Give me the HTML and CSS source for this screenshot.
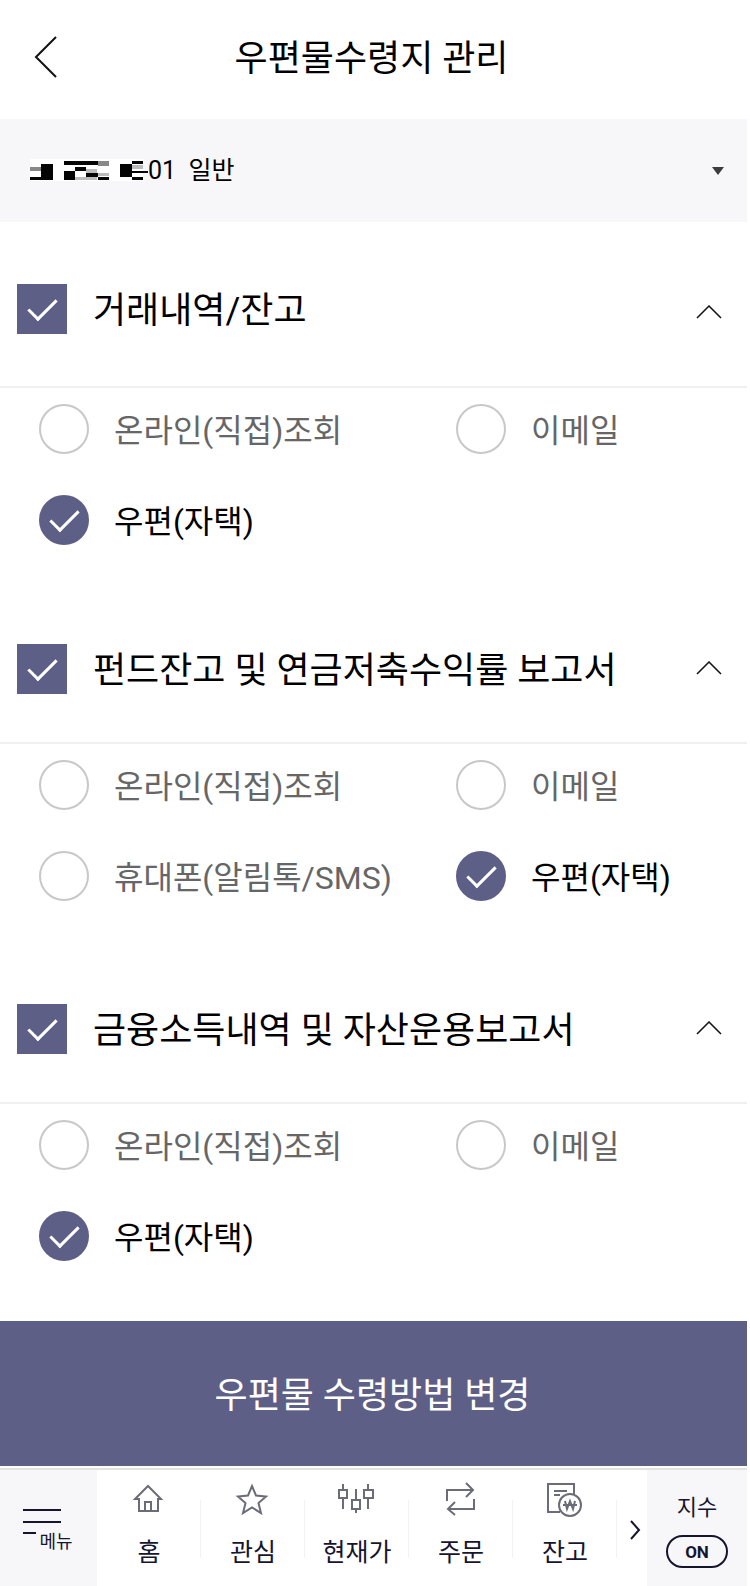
FILE: index.html
```
<!DOCTYPE html>
<html lang="ko">
<head>
    <meta charset="UTF-8">
    <meta name="viewport" content="width=device-width, initial-scale=1">
    <title>우편물수령지 관리</title>
    <link rel="stylesheet" href="styles.css">
</head>
<body>
    <header class="header">
        <button type="button" class="back" aria-label="뒤로">
            <svg width="24" height="44" viewBox="0 0 24 44"><path d="M22 2L2 22l20 20"/></svg>
        </button>
        <h1>우편물수령지 관리</h1>
    </header>

    <div class="account">
        <!-- masked account number -->
        <svg class="mask" width="118" height="24" viewBox="0 0 118 24" aria-hidden="true">
            <path fill="#fff" d="M0 0h113v22H0z"/>
            <path fill="#888" d="M0 8h11v4H0zM68 2h11v5H68z"/>
            <path fill="#bbb" d="M45 18h22v3H45zM56 10h11v4H56zM68 14h11v3H68zM102 6h11v4h-11z"/>
            <path fill="#050505" d="M11 5h12v16H11zM0 18h23v3H0zM34 2h34v4H34zM34 12h11v9H34zM45 8h11v4H45zM56 14h12v4H56zM68 18h11v3H68zM90 5h12v13H90zM102 2h11v3h-11zM102 18h11v3h-11zM102 12h16v2h-16z"/>
        </svg>
        <select id="account" aria-label="계좌 선택">
            <option>01&nbsp; 일반</option>
        </select>
        <svg class="arrow" width="12" height="8" viewBox="0 0 12 8" aria-hidden="true"><path d="M0 0h12L6 8z"/></svg>
    </div>

    <form id="mailForm">
        <section class="group group-first">
            <div class="group-head">
                <input type="checkbox" id="trade" checked>
                <label for="trade">거래내역/잔고</label>
                <button type="button" class="fold" aria-label="접기">
                    <svg width="26" height="14" viewBox="0 0 26 14"><path d="M1 13L13 1l12 12"/></svg>
                </button>
            </div>
            <div class="options">
                <label><input type="radio" name="trade"><span>온라인(직접)조회</span></label>
                <label><input type="radio" name="trade"><span>이메일</span></label>
                <label><input type="radio" name="trade" checked><span>우편(자택)</span></label>
            </div>
        </section>

        <section class="group">
            <div class="group-head">
                <input type="checkbox" id="fund" checked>
                <label for="fund">펀드잔고 및 연금저축수익률 보고서</label>
                <button type="button" class="fold" aria-label="접기">
                    <svg width="26" height="14" viewBox="0 0 26 14"><path d="M1 13L13 1l12 12"/></svg>
                </button>
            </div>
            <div class="options">
                <label><input type="radio" name="fund"><span>온라인(직접)조회</span></label>
                <label><input type="radio" name="fund"><span>이메일</span></label>
                <label><input type="radio" name="fund"><span>휴대폰(알림톡/SMS)</span></label>
                <label><input type="radio" name="fund" checked><span>우편(자택)</span></label>
            </div>
        </section>

        <section class="group">
            <div class="group-head">
                <input type="checkbox" id="income" checked>
                <label for="income">금융소득내역 및 자산운용보고서</label>
                <button type="button" class="fold" aria-label="접기">
                    <svg width="26" height="14" viewBox="0 0 26 14"><path d="M1 13L13 1l12 12"/></svg>
                </button>
            </div>
            <div class="options">
                <label><input type="radio" name="income"><span>온라인(직접)조회</span></label>
                <label><input type="radio" name="income"><span>이메일</span></label>
                <label><input type="radio" name="income" checked><span>우편(자택)</span></label>
            </div>
        </section>

        <button type="submit" class="submit">우편물 수령방법 변경</button>
    </form>

    <nav class="tabbar">
        <button type="button" class="menu">
            <svg width="38" height="26" viewBox="0 0 38 26"><path d="M0 1h38M0 13h38M0 24h13"/></svg>
            <span>메뉴</span>
        </button>
        <a href="#" class="tab">
            <svg width="36" height="36" viewBox="0 0 36 36"><path d="M8 18H4L17 5l13 13h-3v12H8zM14 30v-9h6v9"/></svg>
            <span>홈</span>
        </a>
        <a href="#" class="tab">
            <svg width="36" height="36" viewBox="0 0 36 36"><path d="M17 5l4 9.500 10 1-7.500 6.500 2.500 10-9-5.500-9 5.500 2.500-10L3 15.500l10-1z"/></svg>
            <span>관심</span>
        </a>
        <a href="#" class="tab">
            <svg width="36" height="36" viewBox="0 0 36 36"><path d="M4 3v6M4 17v11M0 9h8v8H0zM17 8v11M13 19h8v9h-8zM17 28v4M29 3v6M29 17v11M25 9h9v8h-9z"/></svg>
            <span>현재가</span>
        </a>
        <a href="#" class="tab">
            <svg width="36" height="36" viewBox="0 0 36 36"><path d="M4 20V9h26M23 2l7 7-7 7M31 18v10H5M12 21l-7 7 7 6"/></svg>
            <span>주문</span>
        </a>
        <a href="#" class="tab">
            <svg width="36" height="36" viewBox="0 0 36 36"><path d="M13 31H1V3h26v10M7 10h13M7 14h6"/><circle cx="23" cy="24" r="11"/><path d="M18 20l2 8 3-8 3 8 2-8M16 24h14"/></svg>
            <span>잔고</span>
        </a>
        <button type="button" class="next" aria-label="다음">
            <svg width="12" height="22" viewBox="0 0 12 22"><path d="M2 2l8 9-8 9"/></svg>
        </button>
        <div class="index">
            <span>지수</span>
            <button type="button">ON</button>
        </div>
    </nav>
</body>
</html>
```

FILE: styles.css
```
* {
    box-sizing: border-box;
}

body {
    margin: 0;
    padding-right: 3px;
    background-color: #fff;
    color: #000;
    font-family: Roboto, "Noto Sans CJK KR", sans-serif;
}

button,
select {
    margin: 0;
    padding: 0;
    border: none;
    background: none;
    color: inherit;
    font-family: inherit;
}

svg {
    display: block;
    fill: none;
    stroke: #111;
    stroke-width: 2;
}

.header {
    display: grid;
    grid-template-columns: 60px 1fr 64px;
    align-items: center;
    height: 119px;
    padding: 0 0 6px;
}

.back {
    padding-left: 34px;
}

.header h1 {
    margin: 0;
    padding-top: 4px;
    font-size: 36px;
    font-weight: 400;
    line-height: 50px;
    text-align: center;
}

.account {
    display: flex;
    align-items: center;
    height: 103px;
    padding: 0 23px 0 30px;
    background-color: #f7f7fa;
}

.account select {
    flex: 1;
    height: 100%;
    appearance: none;
    font-size: 25px;
}

.account svg {
    stroke: none;
}

.arrow {
    fill: #3c3c3c;
}

/* consent groups */
.group {
    min-height: 360px;
}

.group-head {
    display: flex;
    align-items: center;
    padding: 62px 25px 48px 17px;
    border-bottom: 2px solid #f0f0f0;
}

.group-first .group-head {
    padding-bottom: 52px;
}

.group-head label {
    flex: 1;
    margin-left: 26px;
    padding-top: 4px;
    font-size: 36px;
    line-height: 46px;
}

.fold {
    padding-bottom: 3px;
}

.fold svg {
    stroke-width: 1.5;
}

.group-first .fold {
    padding: 6px 0 0;
}

.options {
    display: grid;
    grid-template-columns: 417px 1fr;
    row-gap: 41px;
    padding: 16px 0 0 39px;
}

.options label {
    display: flex;
    align-items: center;
    gap: 25px;
    color: #666;
    font-size: 32px;
    line-height: 46px;
}

.options span {
    padding-top: 4px;
}

.options label:has(:checked) {
    color: #000;
}

input[type="checkbox"],
input[type="radio"] {
    display: grid;
    place-content: center;
    flex: none;
    width: 50px;
    height: 50px;
    margin: 0;
    appearance: none;
    border: 2px solid #c8c8c8;
}

input[type="radio"] {
    border-radius: 50%;
}

input:checked {
    border-color: #5d5f87 !important;
    background-color: #5d5f87;
}

input:checked::after {
    content: "";
    width: 12px;
    height: 25px;
    margin-bottom: 7px;
    border: solid #fff;
    border-width: 0 3px 3px 0;
    transform: rotate(45deg);
}

.submit {
    display: block;
    width: 100%;
    height: 145px;
    margin-top: 19px;
    padding: 0 2px 4px 0;
    background-color: #5d5f87;
    color: #fff;
    font-size: 36px;
}

/* bottom bar */
.tabbar {
    display: grid;
    grid-template-columns: 97px repeat(5, 1fr) 30px 100px;
    height: 118px;
    margin-top: 2px;
    border-top: 2px solid #e2e2e2;
    color: #15152f;
}

.menu {
    display: grid;
    grid-template-columns: 50px;
    align-content: center;
    justify-content: center;
    padding: 3px 2px 0 0;
    background-color: #f7f7fa;
}

.menu svg,
.menu span {
    grid-area: 1 / 1;
}

.menu svg,
.next svg {
    stroke: #15152f;
}

.menu span {
    padding-top: 24px;
    font-size: 18px;
    line-height: 18px;
    text-align: right;
}

.tab {
    display: flex;
    flex-direction: column;
    align-items: center;
    gap: 18px;
    padding-top: 11px;
    background: linear-gradient(#f2f2f2, #f2f2f2) no-repeat;
    background-size: 1px 58px;
    background-position: right 0 top 30px;
    color: inherit;
    font-size: 25px;
    line-height: 36px;
    text-decoration: none;
}

.tab svg {
    overflow: visible;
    stroke: #6c6c78;
}

.next {
    display: flex;
    align-items: center;
    justify-content: center;
    padding: 3px 0 0 5px;
}

.index {
    display: flex;
    flex-direction: column;
    align-items: center;
    gap: 11px;
    padding-top: 22px;
    background-color: #f7f7fa;
    font-size: 22px;
    line-height: 32px;
}

.index button {
    width: 62px;
    height: 33px;
    border: 2px solid #15152f;
    border-radius: 17px;
    font-size: 17px;
    font-weight: 700;
}
```
